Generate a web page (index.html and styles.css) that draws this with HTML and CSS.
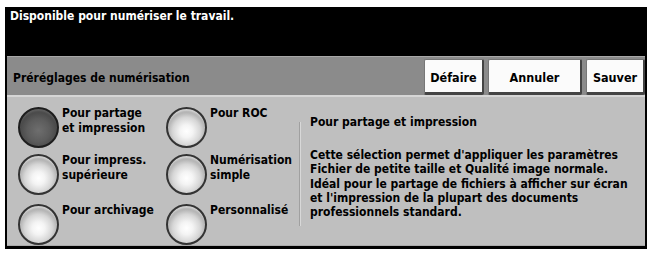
FILE: index.html
```html
<!DOCTYPE html>
<html lang="fr">
<head>
<meta charset="utf-8">
<link rel="stylesheet" href="styles.css">
</head>
<body>
<div class="screen">
  <div class="status">Disponible pour numériser le travail.</div>
  <div class="header">
    <div class="title">Préréglages de numérisation</div>
    <div class="buttons">
      <div class="btn btn-undo">Défaire</div>
      <div class="btn btn-cancel">Annuler</div>
      <div class="btn btn-save">Sauver</div>
    </div>
  </div>
  <div class="content">
    <div class="options">
      <div class="option"><span class="radio selected"></span><span class="label">Pour partage<br>et impression</span></div>
      <div class="option"><span class="radio"></span><span class="label">Pour ROC</span></div>
      <div class="option"><span class="radio"></span><span class="label">Pour impress.<br>supérieure</span></div>
      <div class="option"><span class="radio"></span><span class="label">Numérisation<br>simple</span></div>
      <div class="option"><span class="radio"></span><span class="label">Pour archivage</span></div>
      <div class="option"><span class="radio"></span><span class="label">Personnalisé</span></div>
    </div>
    <div class="divider"></div>
    <div class="desc">
      <div class="desc-title">Pour partage et impression</div>
      <p class="desc-text">Cette sélection permet d'appliquer les paramètres<br>Fichier de petite taille et Qualité image normale.<br>Idéal pour le partage de fichiers à afficher sur écran<br>et l'impression de la plupart des documents<br>professionnels standard.</p>
    </div>
  </div>
</div>
</body>
</html>
```

FILE: styles.css
```css
html, body {
  margin: 0;
  padding: 0;
  background: #fff;
}
body {
  font-family: "DejaVu Sans Condensed", "Liberation Sans", sans-serif;
  font-weight: bold;
  font-size: 12px;
}
.screen {
  margin: 7px 0 0 5px;
  width: 642px;
  height: 242px;
  background: #000;
  padding: 0 2px 3px 2px;
  box-sizing: border-box;
  display: flex;
  flex-direction: column;
}
.status {
  flex: none;
  color: #fff;
  height: 49px;
  padding: 2px 0 0 3px;
  box-sizing: border-box;
  line-height: 14px;
}
.header {
  flex: none;
  height: 41px;
  background: #8b8b8b;
  border-top: 1px solid #a8a8a8;
  border-bottom: 2px solid #d6d6d6;
  box-sizing: border-box;
  display: flex;
  align-items: center;
  justify-content: space-between;
}
.title {
  color: #000;
  padding-left: 6px;
  margin-top: 4px;
}
.buttons {
  display: flex;
  gap: 4px;
  align-self: flex-end;
}
.btn {
  height: 36px;
  background: #fbfbfb;
  border: 1px solid #777;
  border-right: 2px solid #444;
  border-bottom: 3px solid #444;
  border-radius: 2px;
  box-sizing: border-box;
  display: flex;
  align-items: center;
  justify-content: center;
  color: #000;
  padding-top: 2px;
  font-size: 12.5px;
}
.btn-undo { width: 60px; }
.btn-cancel { width: 94px; }
.btn-save { width: 59px; }
.content {
  flex: 1;
  min-height: 0;
  overflow: hidden;
  background: #bfbfbf;
  display: flex;
  padding: 10px 0 0 11px;
  box-sizing: border-box;
  border-bottom: 1px solid #aaa;
}
.options {
  flex: none;
  display: grid;
  grid-template-columns: 148px 122px;
  grid-template-rows: 47px 50px 50px;
  align-content: start;
}
.option {
  display: flex;
  align-items: flex-start;
  gap: 3px;
}
.radio {
  flex: none;
  width: 41px;
  height: 41px;
  border-radius: 50%;
  box-sizing: border-box;
  border: 2px solid #333;
  background: radial-gradient(circle at 50% 60%, #ffffff 0%, #f4f4f4 22%, #d6d6d6 48%, #a4a4a4 72%, #7a7a7a 90%, #5a5a5a 100%);
  box-shadow: inset 0 3px 2px -1px rgba(255,255,255,0.55);
}
.radio.selected {
  border-color: #1e1e1e;
  background: radial-gradient(circle at 50% 58%, #6e6e6e 0%, #5c5c5c 40%, #444 72%, #2a2a2a 100%);
  box-shadow: inset 0 3px 2px -1px rgba(255,255,255,0.15);
}
.label {
  line-height: 15px;
  color: #000;
  margin-top: -1px;
}
.divider {
  flex: none;
  width: 0;
  border-left: 1px solid #a0a0a0;
  border-right: 1px solid #d8d8d8;
  height: 104px;
  margin: 15px 0 0 11px;
}
.desc {
  padding: 8px 0 0 9px;
  color: #000;
}
.desc-title {
  line-height: 14px;
}
.desc-text {
  margin: 19px 0 0 0;
  line-height: 14.3px;
}
```
